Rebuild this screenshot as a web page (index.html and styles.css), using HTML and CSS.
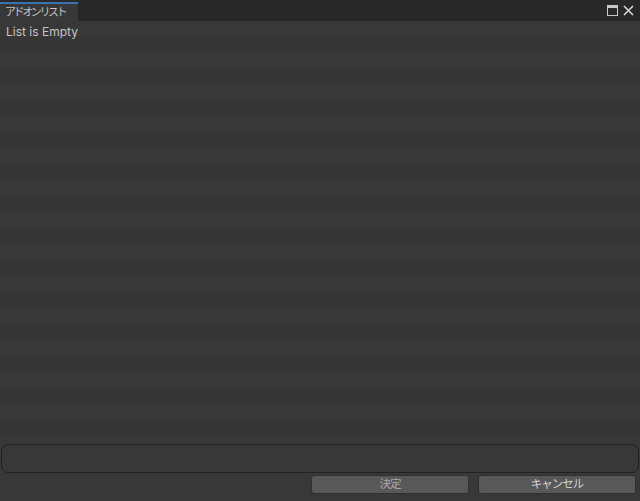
FILE: index.html
```html
<!DOCTYPE html>
<html lang="ja">
<head>
<meta charset="utf-8">
<link rel="stylesheet" href="styles.css">
</head>
<body>
<div class="window">
  <div class="header">
    <div class="tab">アドオンリスト</div>
    <div class="controls">
      <svg class="icon" width="11" height="11" viewBox="0 0 11 11"><rect x="0.5" y="0.5" width="10" height="10" fill="none" stroke="#c8c8c8"/><rect x="1" y="1" width="9" height="2" fill="#c8c8c8"/></svg>
      <svg class="icon" width="11" height="11" viewBox="0 0 11 11"><path d="M1 1 L10 10 M10 1 L1 10" stroke="#d8d8d8" stroke-width="1.6"/></svg>
    </div>
  </div>
  <div class="list">
    <div class="empty">List is Empty</div>
  </div>
  <div class="footer">
    <div class="field"></div>
    <div class="buttons">
      <button class="btn dim">決定</button>
      <button class="btn">キャンセル</button>
    </div>
  </div>
</div>
</body>
</html>
```
FILE: styles.css
```css
html, body { margin: 0; padding: 0; }
body {
  background: #383838;
  font-family: Inter, "Noto Sans CJK JP", sans-serif;
  font-size: 12px;
  color: #c4c4c4;
}
.window { width: 640px; height: 501px; display: flex; flex-direction: column; }
.header {
  height: 21px;
  background: #282828;
  display: flex;
  align-items: flex-end;
  justify-content: space-between;
}
.tab {
  width: 73px;
  height: 17px;
  padding-left: 5px;
  background: #383838;
  border-top: 2px solid #3a72b0;
  line-height: 17px;
  font-size: 11px;
  letter-spacing: -2.4px;
  white-space: nowrap;
  overflow: hidden;
  color: #c4c4c4;
}
.controls {
  align-self: center;
  display: flex;
  gap: 5px;
  padding-right: 6px;
}
.icon { display: block; }
.list {
  height: 416px;
  background: repeating-linear-gradient(to bottom, #383838 0, #383838 16px, #353535 16px, #353535 32px);
}
.empty { padding: 3px 6px; line-height: 16px; font-size: 12px; }
.footer { flex: 1; padding: 7px 1px 0 1px; display: flex; flex-direction: column; }
.field {
  height: 27px;
  border: 1px solid #212121;
  border-radius: 7px;
  background: #383838;
}
.buttons {
  display: flex;
  justify-content: flex-end;
  gap: 9px;
  margin-top: 2px;
  padding-right: 3px;
}
.btn {
  width: 158px;
  height: 19px;
  padding: 0;
  background: #585858;
  border: 1px solid #303030;
  border-radius: 3px;
  font-family: Inter, "Noto Sans CJK JP", sans-serif;
  font-size: 11.5px;
  letter-spacing: -1px;
  line-height: 17px;
  color: #d2d2d2;
}
.btn.dim { color: #a8a8a8; }
```
